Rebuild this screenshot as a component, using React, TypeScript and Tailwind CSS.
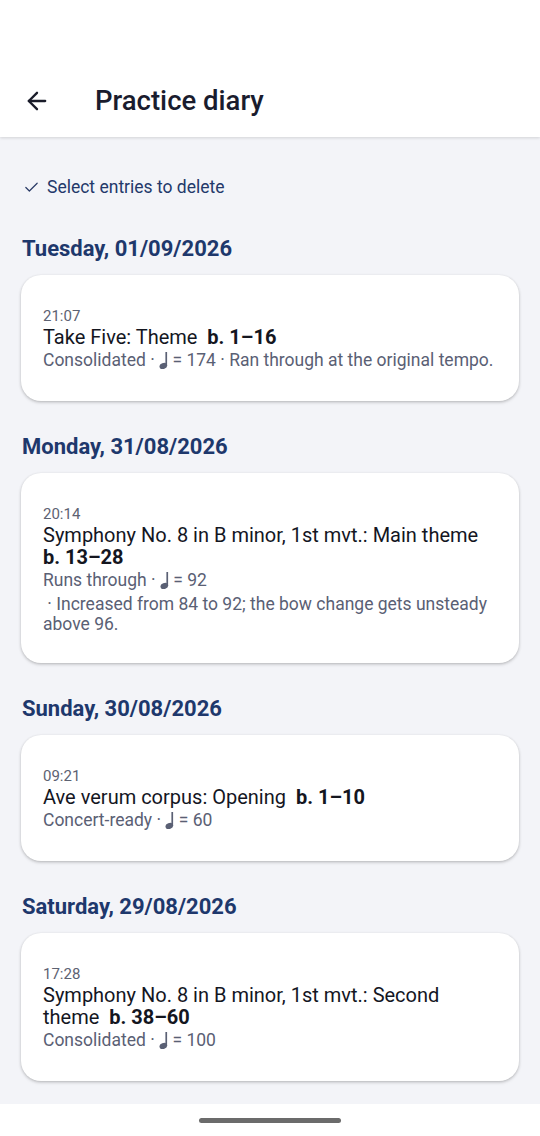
import { ArrowLeft, Check } from 'lucide-react';

type Entry = {
  time: string;
  title: string;
  bars: string;
  status: string;
  tempo: number;
  note?: string;
  noteOwnLine?: boolean;
};

const days: { date: string; entries: Entry[] }[] = [
  {
    date: 'Tuesday, 01/09/2026',
    entries: [
      { time: '21:07', title: 'Take Five: Theme', bars: 'b. 1–16', status: 'Consolidated', tempo: 174, note: 'Ran through at the original tempo.' },
    ],
  },
  {
    date: 'Monday, 31/08/2026',
    entries: [
      {
        time: '20:14',
        title: 'Symphony No. 8 in B minor, 1st mvt.: Main theme',
        bars: 'b. 13–28',
        status: 'Runs through',
        tempo: 92,
        note: 'Increased from 84 to 92; the bow change gets unsteady above 96.',
        noteOwnLine: true,
      },
    ],
  },
  {
    date: 'Sunday, 30/08/2026',
    entries: [{ time: '09:21', title: 'Ave verum corpus: Opening', bars: 'b. 1–10', status: 'Concert-ready', tempo: 60 }],
  },
  {
    date: 'Saturday, 29/08/2026',
    entries: [
      { time: '17:28', title: 'Symphony No. 8 in B minor, 1st mvt.: Second theme', bars: 'b. 38–60', status: 'Consolidated', tempo: 100 },
    ],
  },
];

// quarter note (crotchet) icon
function QuarterNote() {
  return (
    <svg viewBox="0 0 9 17" className="inline-block w-[9px] h-[17px] align-[-3px]" fill="currentColor">
      <rect x="6.4" y="0" width="1.7" height="14" />
      <ellipse cx="4.3" cy="14" rx="3.9" ry="2.9" transform="rotate(-22 4.3 14)" />
    </svg>
  );
}

function EntryCard({ e }: { e: Entry }) {
  return (
    <div className="bg-white rounded-[20px] pl-[22px] pr-[22px] pt-[31px] pb-[29px] shadow-[0_1px_3px_rgba(0,0,0,0.22),0_2px_4px_rgba(0,0,0,0.06)]">
      <p className="text-[15px] leading-[20px] text-[#5d6272]">{e.time}</p>
      <p className="text-[20px] leading-[22px] text-[#14161f]">
        {e.title}{'\u00a0 '}
        <span className="font-bold whitespace-nowrap">{e.bars}</span>
      </p>
      <p className={`text-[17.5px] leading-[24px] text-[#5a6074] ${e.note && !e.noteOwnLine ? 'whitespace-nowrap' : ''}`}>
        {e.status} · <QuarterNote /> = {e.tempo}
        {e.note && !e.noteOwnLine && <> · {e.note}</>}
      </p>
      {e.note && e.noteOwnLine && (
        <p className="mt-[2px] text-[17.5px] leading-[20px] text-[#5a6074]">{'\u00a0· '}{e.note}</p>
      )}
    </div>
  );
}

export default function App() {
  return (
    <div className="w-[540px] h-[1136px] flex flex-col bg-[#f3f4f8] font-['Roboto','DejaVu_Sans',sans-serif] overflow-hidden">
      {/* status bar + app bar */}
      <div className="bg-white shadow-[0_1px_3px_rgba(0,0,0,0.14)] z-10">
        <div className="h-[64px]" />
        <div className="h-[73px] flex items-center">
          <ArrowLeft className="ml-[23px] w-[28px] h-[28px] text-[#1a1c2a]" strokeWidth={2} />
          <h1 className="ml-[44px] text-[27.5px] font-medium text-[#1a1c2e]">Practice diary</h1>
        </div>
      </div>

      <div className="flex-1 px-[21px] pt-[38px]">
        <div className="flex items-center h-[24px]">
          <Check className="ml-[2px] w-[17px] h-[17px] text-[#2a3b66]" strokeWidth={1.7} />
          <span className="ml-[7px] text-[17.5px] text-[#23396a]">Select entries to delete</span>
        </div>

        <div className="mt-[36px] flex flex-col gap-[32px]">
          {days.map((d) => (
            <section key={d.date}>
              <h2 className="pl-px text-[22px] leading-[28px] font-bold text-[#1e386c] mb-[12px]">{d.date}</h2>
              {d.entries.map((e) => (
                <EntryCard key={e.time} e={e} />
              ))}
            </section>
          ))}
        </div>
      </div>

      {/* gesture bar */}
      <div className="h-[32px] bg-white flex items-center justify-center">
        <div className="w-[142px] h-[5px] rounded-full bg-[#6b6b6b]" />
      </div>
    </div>
  );
}
